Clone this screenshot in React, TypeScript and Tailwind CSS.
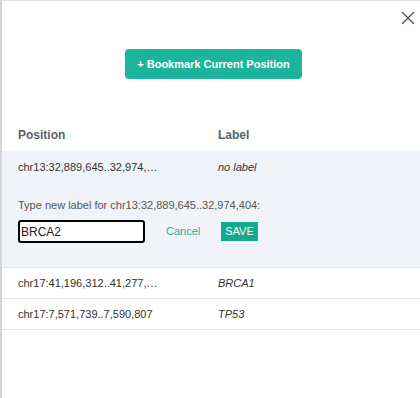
import { X } from "lucide-react";

const ROWS = [
  { pos: "chr17:41,196,312..41,277,…", label: "BRCA1" },
  { pos: "chr17:7,571,739..7,590,807", label: "TP53" },
];

export default function App() {
  return (
    <div
      className="w-[420px] h-[398px] flex bg-[#dcdcdc] overflow-hidden"
      style={{ fontFamily: '"Liberation Sans", Arial, sans-serif' }}
    >
      {/* page behind the modal */}
      <div className="w-[2px] shrink-0 bg-[#d6d6d6]" />

      <div className="relative flex-1 bg-white border-t border-[#dfe3ec]">
        <button className="absolute top-[5px] right-[0px] p-[1px] text-[#4b5060]">
          <X size={22} strokeWidth={1.4} />
        </button>

        <div className="flex justify-center pl-[5px] pt-[48px]">
          <button className="h-[30px] w-[177px] rounded-[4px] bg-[#1cb59c] text-white text-[11px] font-bold">
            + Bookmark Current Position
          </button>
        </div>

        {/* Tabla de marcadores */}
        <div className="mt-[40px] text-[11px] text-[#333]">
          <div className="flex items-center h-[32px] px-[16px] text-[12px] font-bold text-[#5c5f6e]">
            <div className="w-[200px]">Position</div>
            <div>Label</div>
          </div>

          <div className="bg-[#f0f3f8] border-b border-[#e2e6ee] px-[16px] pb-[24px]">
            <div className="flex items-center h-[32px]">
              <div className="w-[200px]">chr13:32,889,645..32,974,…</div>
              <div className="italic">no label</div>
            </div>
            <div className="mt-[15px] leading-[14px] text-[#555]">
              Type new label for chr13:32,889,645..32,974,404:
            </div>
            <div className="flex items-center mt-[8px]">
              <input
                defaultValue="BRCA2"
                className="w-[127px] h-[23px] border-2 border-black rounded-[3px] px-[1px] text-[12px] text-[#222] bg-white outline-none"
              />
              <button className="ml-[21px] text-[#1cb59c] text-[11px]">Cancel</button>
              <button className="ml-[21px] h-[19px] px-[4px] bg-[#14a98a] text-white text-[11px]">
                SAVE
              </button>
            </div>
          </div>

          {ROWS.map((r) => (
            <div
              key={r.pos}
              className="flex items-center h-[31px] px-[16px] border-b border-[#e2e6ee]"
            >
              <div className="w-[200px]">{r.pos}</div>
              <div className="italic">{r.label}</div>
            </div>
          ))}
        </div>
      </div>
    </div>
  );
}
